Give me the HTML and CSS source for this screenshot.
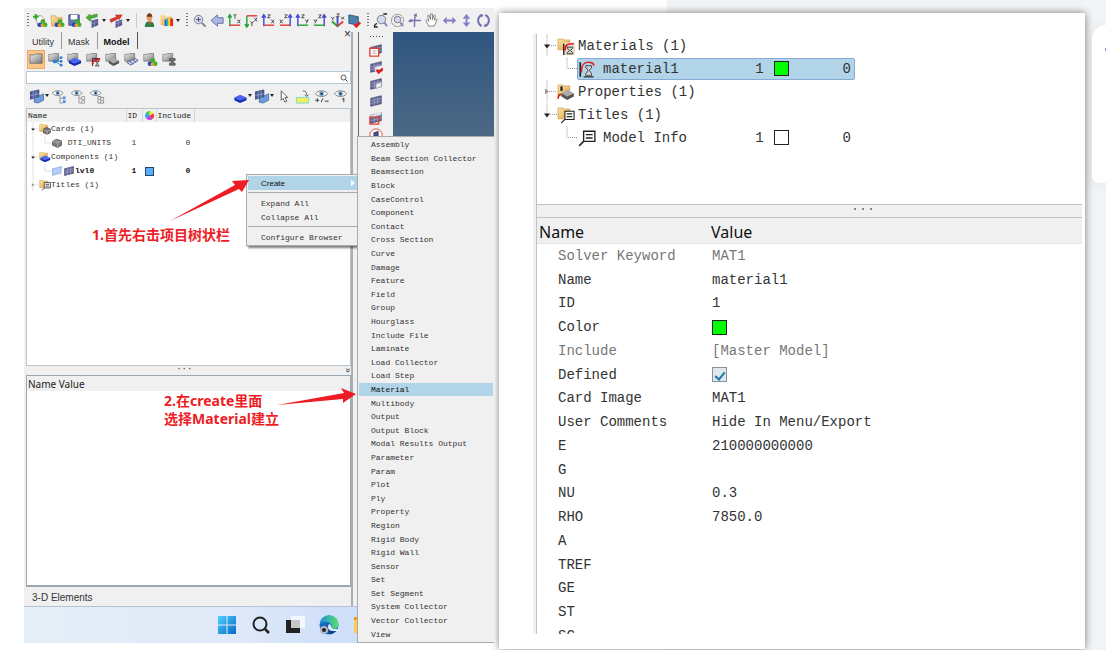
FILE: index.html
```
<!DOCTYPE html>
<html lang="zh">
<head>
    <meta charset="UTF-8">
    <meta name="viewport" content="width=device-width, initial-scale=1.0">
    <title>Material</title>
    <link rel="stylesheet" href="styles.css">
</head>
<body>

<!-- Icon sprite -->
<svg class="sprite" aria-hidden="true">
    <defs>
        <linearGradient id="gFolder" x2="1" y2="1"><stop offset="0" stop-color="#ffe6a8"/><stop offset="1" stop-color="#dda03c"/></linearGradient>
        <linearGradient id="gGray" x2="1" y2="1"><stop offset="0" stop-color="#eee"/><stop offset="1" stop-color="#777"/></linearGradient>
        <linearGradient id="gWin" x2="1" y2="1"><stop offset="0" stop-color="#4fd0fb"/><stop offset="1" stop-color="#0669c8"/></linearGradient>
        <linearGradient id="gEdge" x2="1"><stop offset="0" stop-color="#1b8fe0"/><stop offset="1" stop-color="#5be06a"/></linearGradient>
    </defs>
    <symbol id="balls" viewBox="0 0 16 16"><circle cx="10.500" cy="9" r="2.500" fill="#3fae2a"/><circle cx="7.500" cy="12.500" r="2.500" fill="#1c3fd4"/><circle cx="13" cy="12.500" r="2.500" fill="#3fae2a"/><circle cx="10" cy="13" r="2" fill="#e8a020"/></symbol>
    <symbol id="new" viewBox="0 0 16 16"><path d="M3 3h6l3 3v8H5z" fill="#fff" stroke="#999"/><path d="M3 1v6M0 4h6" stroke="#36a52c" stroke-width="2"/><use href="#balls"/></symbol>
    <symbol id="open" viewBox="0 0 16 16"><path d="M1 3h5l1 2h6v3l-2 6H2z" fill="url(#gFolder)" stroke="#c58c30" stroke-width=".6"/><use href="#balls"/></symbol>
    <symbol id="save" viewBox="0 0 16 16"><path d="M2 2h11v11H2z" fill="#6877ad" stroke="#3e4a80"/><path d="M4 2h7v5H4z" fill="#fff"/><use href="#balls"/></symbol>
    <symbol id="mesh" viewBox="0 0 16 16"><path d="M2 5l12-3v9L2 14z" fill="#626795" stroke="#333a68" stroke-width=".8"/><path d="M2 8l12-3M2 11l12-3M6 4v9M10 3v9" stroke="#a7abcc" stroke-width=".8" fill="none"/></symbol>
    <symbol id="import" viewBox="0 0 16 16"><path d="M7 8l7-2v7l-7 3z" fill="#565b91"/><path d="M10 7v8M7 12l7-3" stroke="#9da1c4" stroke-width=".7"/><path d="M1 5l4-4v2l8-2v3L6 6v3z" fill="#4caf35" stroke="#2c7b1c" stroke-width=".5"/></symbol>
    <symbol id="export" viewBox="0 0 16 16"><path d="M7 9l7-2v6l-7 3z" fill="#565b91"/><path d="M10 8v7M7 12l7-3" stroke="#9da1c4" stroke-width=".7"/><path d="M1 7l7-3-1-2 7 0-3 5-1-1-8 4z" fill="#e1382d" stroke="#9b2019" stroke-width=".5"/></symbol>
    <symbol id="user" viewBox="0 0 16 16"><path d="M3 15c0-5 2-6 5-6s5 1 5 6z" fill="#27824b"/><path d="M7 9l2 5 1-5z" fill="#e43"/><ellipse cx="8" cy="5" rx="3" ry="4" fill="#e0a066"/><path d="M5 4c0-5 6-5 6 0z" fill="#713616"/></symbol>
    <symbol id="chart" viewBox="0 0 16 16"><path d="M1 2h5l1 2h7v9H2z" fill="url(#gFolder)"/><path d="M6 14V7h2v7z" fill="#25d"/><path d="M8 14V6h2v8z" fill="#0bc"/><path d="M10 14V6h2v8z" fill="#fd0"/><path d="M12 14V6h3v8z" fill="#e22"/></symbol>
    <symbol id="zoom" viewBox="0 0 16 16"><circle cx="7" cy="7" r="4.500" fill="#d8ddf3" stroke="#777c93"/><path d="M10.500 10.500l4 4" stroke="#7c7c95" stroke-width="2"/><path d="M7 4.500v5M4.500 7h5" stroke="#446"/></symbol>
    <symbol id="back" viewBox="0 0 16 16"><path d="M1 8l7-6v3h6v6H8v3z" fill="#acb6e5" stroke="#6570a9"/></symbol>
    <symbol id="ax1" viewBox="0 0 16 16"><path d="M3 14V2M1 5l2-3 2 3" stroke="#20a52c" stroke-width="1.500" fill="none"/><path d="M3 13h11" stroke="#e53838" stroke-width="1.500"/><path d="M7 1l1.500 2L10 1M8.500 3v3M11 7l3 4M14 7l-3 4" stroke="#444" fill="none"/></symbol>
    <symbol id="ax2" viewBox="0 0 16 16"><path d="M3 3v12M1 12l2 3 2-3" stroke="#20a52c" stroke-width="1.500" fill="none"/><path d="M3 3h11" stroke="#e53838" stroke-width="1.500"/><path d="M7 9l1.500 2L10 9M8.500 11v3M11 5l3 4M14 5l-3 4" stroke="#444" fill="none"/></symbol>
    <symbol id="ax3" viewBox="0 0 16 16"><path d="M3 14V2M1 5l2-3 2 3" stroke="#4347d8" stroke-width="1.500" fill="none"/><path d="M3 13h11" stroke="#e53838" stroke-width="1.500"/><path d="M7 2h3L7 5h3M11 7l3 4M14 7l-3 4" stroke="#444" fill="none"/></symbol>
    <symbol id="ax4" viewBox="0 0 16 16"><path d="M13 14V2M11 5l2-3 2 3" stroke="#4347d8" stroke-width="1.500" fill="none"/><path d="M2 13h11" stroke="#e53838" stroke-width="1.500"/><path d="M7 2h3L7 5h3M2 7l3 4M5 7l-3 4" stroke="#444" fill="none"/></symbol>
    <symbol id="ax5" viewBox="0 0 16 16"><path d="M3 14V2M1 5l2-3 2 3" stroke="#4347d8" stroke-width="1.500" fill="none"/><path d="M3 13h11" stroke="#20a52c" stroke-width="1.500"/><path d="M7 2h3L7 5h3M11 7l1.500 2L14 7l-2 4" stroke="#444" fill="none"/></symbol>
    <symbol id="ax6" viewBox="0 0 16 16"><path d="M13 14V2M11 5l2-3 2 3" stroke="#4347d8" stroke-width="1.500" fill="none"/><path d="M2 13h11" stroke="#20a52c" stroke-width="1.500"/><path d="M7 2h3L7 5h3M2 7l1.500 2L5 7l-2 4" stroke="#444" fill="none"/></symbol>
    <symbol id="ax7" viewBox="0 0 16 16"><path d="M8 15V4" stroke="#4347d8" stroke-width="2"/><path d="M8 14L2 9" stroke="#20a52c" stroke-width="2"/><path d="M8 14l6-5" stroke="#e53838" stroke-width="2"/><path d="M1 4l2 2 2-2M3 6v2M7 1h3L7 4h3M12 4l3 3M15 4l-3 3" stroke="#444" fill="none"/></symbol>
    <symbol id="view" viewBox="0 0 16 16"><path d="M2 2l10 2v9L2 11z" fill="#4b80ab" stroke="#27577f"/><path d="M8 12l2 2 4-4" stroke="#df2020" stroke-width="3" fill="none"/></symbol>
    <symbol id="lens" viewBox="0 0 16 16"><circle cx="9" cy="7" r="4.500" fill="#d5d8f3" stroke="#777"/><path d="M12 10l3 4" stroke="#8a83b5" stroke-width="2"/><path d="M1 14l3-3M1 15h4M11 1h4" stroke="#222" stroke-width="1.500"/></symbol>
    <symbol id="lens2" viewBox="0 0 16 16"><circle cx="8" cy="8" r="6.500" fill="none" stroke="#666" stroke-dasharray="2 1"/><circle cx="8" cy="7" r="3.500" fill="#d5d8f3" stroke="#777"/><path d="M11 10l3 4" stroke="#8a83b5" stroke-width="2"/></symbol>
    <symbol id="pan" viewBox="0 0 16 16"><path d="M9 1c-1 4-1 9-1 14M2 8h13" stroke="#7774ac" stroke-width="1.500" fill="none"/><path d="M1 9l4-3v4zM7 3l3-3 1 4z" fill="#7774ac"/></symbol>
    <symbol id="hand" viewBox="0 0 16 16"><path d="M5 14L2 8l1-1 2 2-1-6 1-1 2 5V1h2v6l2-5 1 1-1 5 2-2 1 1-3 7z" fill="#fff" stroke="#666" stroke-width=".8"/></symbol>
    <symbol id="horiz" viewBox="0 0 16 16"><path d="M1 8l4-4v3h6V4l4 4-4 4V9H5v3z" fill="#8280c7"/></symbol>
    <symbol id="vert" viewBox="0 0 16 16"><path d="M8 1l4 5H9v4h3l-4 5-4-5h3V6H4z" fill="#8280c7"/></symbol>
    <symbol id="spin" viewBox="0 0 16 16"><path d="M6 2C1 5 1 11 6 14M10 2c5 3 5 9 0 12" fill="none" stroke="#726fae" stroke-width="2"/><path d="M5 1l3 1-2 3zM11 15l-3-1 2-3z" fill="#726fae"/></symbol>
    <symbol id="gfold" viewBox="0 0 16 16"><path d="M1 3h5l1-1h7v10H1z" fill="url(#gGray)" stroke="#555" stroke-width=".7"/></symbol>
    <symbol id="yfold" viewBox="0 0 16 16"><path d="M1 2h5l1 1h6v10H1z" fill="url(#gFolder)" stroke="#c79b4c" stroke-width=".7"/></symbol>
    <symbol id="blue" viewBox="0 0 16 16"><path d="M2 9l6-3 7 3-7 3z" fill="#4a66f3"/><path d="M2 9l6 3 7-3v3l-7 3-6-3z" fill="#172bb5"/></symbol>
    <symbol id="slab" viewBox="0 0 16 16"><path d="M4 9l5-3 6 3-6 3z" fill="#aaa"/><path d="M4 9l5 3 6-3v3l-6 3-5-3z" fill="#555"/></symbol>
    <symbol id="curve" viewBox="0 0 16 16"><path d="M7 15V7h8" fill="none" stroke="#222"/><path d="M7 13c0-4 2-5 8-5" fill="none" stroke="#e01c2b" stroke-width="2"/><path d="M10 10h4l-2 2 2 3h-4l2-3z" fill="#ccc" stroke="#333" stroke-width=".7"/></symbol>
    <symbol id="g2" viewBox="0 0 16 16"><use href="#gfold" width="13" height="13"/><path d="M13 6L7 10l7 4M7 10h8" stroke="#3b86ce" fill="none"/><circle cx="7" cy="10" r="2" fill="#2d7fd6"/><circle cx="14" cy="6" r="1.500" fill="#2d7fd6"/><circle cx="14" cy="10" r="1.500" fill="#2d7fd6"/><circle cx="14" cy="14" r="1.500" fill="#2d7fd6"/></symbol>
    <symbol id="g3" viewBox="0 0 16 16"><use href="#gfold" width="13" height="13"/><use href="#blue"/></symbol>
    <symbol id="g4" viewBox="0 0 16 16"><use href="#gfold" width="13" height="13"/><use href="#curve"/></symbol>
    <symbol id="g5" viewBox="0 0 16 16"><use href="#gfold" width="13" height="13"/><use href="#slab"/></symbol>
    <symbol id="g6" viewBox="0 0 16 16"><use href="#gfold" width="13" height="13"/><path d="M3 11l9-4 3 2-8 5zM6 10l4 3M9 8l4 3" fill="#cbd1ef" stroke="#555c92"/></symbol>
    <symbol id="g7" viewBox="0 0 16 16"><use href="#gfold" width="13" height="13"/><use href="#balls"/></symbol>
    <symbol id="g8" viewBox="0 0 16 16"><use href="#gfold" width="13" height="13"/><path d="M8 7h6v2h-2v3h2v2H8v-2h2V9H8z" fill="#777" stroke="#555"/></symbol>
    <symbol id="y-card" viewBox="0 0 16 16"><use href="#yfold" width="14" height="14"/><path d="M6 8l4-2 5 2v5l-4 2-5-2z" fill="#777" stroke="#444"/><path d="M6 9l5 2 4-2M11 11v4" stroke="#bbb" fill="none"/></symbol>
    <symbol id="y-blue" viewBox="0 0 16 16"><use href="#yfold" width="14" height="14"/><use href="#blue"/></symbol>
    <symbol id="y-curve" viewBox="0 0 16 16"><use href="#yfold" width="14" height="14"/><path d="M6 5h10v11H6z" fill="#e9dcc8"/><path d="M6 16V6" stroke="#222" stroke-width="1.200"/><path d="M7 12c0-5 2-6 8-6" fill="none" stroke="#e01c2b" stroke-width="1.500"/><path d="M9 9h5v1l-2 2 2 2v1H9v-1l2-2-2-2z" fill="#ccc" stroke="#333" stroke-width=".8"/></symbol>
    <symbol id="y-slab" viewBox="0 0 16 16"><use href="#yfold" width="14" height="14"/><path d="M1 14c0-3 1-4 3-4" stroke="#c22" stroke-width="1.500" fill="none"/><path d="M4 3v4" stroke="#222" stroke-width="2"/><use href="#slab"/></symbol>
    <symbol id="note" viewBox="0 0 16 16"><path d="M5 2h10v9H5z" fill="#fff" stroke="#222" stroke-width="1.200"/><path d="M7 5h6M7 8h6M5 11l-4 4" stroke="#222" stroke-width="1.300"/></symbol>
    <symbol id="y-note" viewBox="0 0 16 16"><use href="#yfold" width="14" height="14"/><use href="#note" x="3" y="3" width="13" height="13"/></symbol>
    <symbol id="card" viewBox="0 0 16 16"><path d="M2 6l5-3 7 2v6l-5 3-7-3z" fill="#777" stroke="#555"/><path d="M2 6l7 2 5-3M9 8v6M5 4l6 3" stroke="#bbb" fill="none"/></symbol>
    <symbol id="material" viewBox="0 0 16 16"><path d="M2 15V2" stroke="#222" stroke-width="1.500"/><path d="M3 11C3 4 5 2 9 2s5 1 5 3" stroke="#e01c2b" stroke-width="1.500" fill="none"/><path d="M7 5h5v2l-2 2 2 3v2H7v-2l2-3-2-2z" fill="#ccc" stroke="#444" stroke-width=".8"/><path d="M5 15h9" stroke="#222"/></symbol>
    <symbol id="sheet" viewBox="0 0 16 16"><path d="M2 5l5-1 7-2-1 9-5 1-6 2z" fill="#b5cffb" stroke="#86a5dc"/></symbol>
    <symbol id="bluemesh" viewBox="0 0 16 16"><path d="M5 7l4 1 6-3v7l-6 3-4-1z" fill="#6f9ddb" stroke="#345a96" stroke-width=".7"/><path d="M1 3l9-2v7l-9 3z" fill="#4a5a94" stroke="#28366d" stroke-width=".7"/><path d="M1 7l9-2M4 2v8M7 2v7" fill="none" stroke="#a9b5dc" stroke-width=".7"/></symbol>
    <symbol id="eye" viewBox="0 0 16 16"><path d="M1 5c3-4 10-4 13 0-3 4-10 4-13 0z" fill="#fff" stroke="#777"/><circle cx="7.500" cy="5" r="2.500" fill="#6598c8"/><circle cx="7.500" cy="5" r="1" fill="#123"/></symbol>
    <symbol id="eye1" viewBox="0 0 16 16"><use href="#eye" width="14" height="14"/><path d="M9 7v8h3M9 10h3" stroke="#999" fill="none"/><path d="M12 8h3v3h-3zM12 12h3v3h-3z" fill="#568de0"/></symbol>
    <symbol id="eye2" viewBox="0 0 16 16"><use href="#eye" width="14" height="14"/><path d="M9 7v8h3M9 10h3" stroke="#999" fill="none"/><path d="M12 8h3v3h-3zM12 12h3v3h-3z" fill="#fff" stroke="#999"/></symbol>
    <symbol id="eye3" viewBox="0 0 16 16"><use href="#eye" width="14" height="14"/><path d="M9 8h3v3H9zM12 12h3v3h-3zM12 9h3v2M9 12v3h3" fill="#fff" stroke="#888"/></symbol>
    <symbol id="eye4" viewBox="0 0 16 16"><use href="#eye"/><path d="M1 12h4M3 10v4M9 10l-2 4M11 13h4" stroke="#333"/></symbol>
    <symbol id="eye5" viewBox="0 0 16 16"><use href="#eye"/><path d="M9 11l2-1v4" stroke="#333" fill="none"/></symbol>
    <symbol id="cursor" viewBox="0 0 16 16"><path d="M5 2v10l2-2 2 4 2-1-2-4h3z" fill="#fff" stroke="#555"/></symbol>
    <symbol id="mark" viewBox="0 0 16 16"><path d="M1 9h13v6H1z" fill="#f5ee55" stroke="#6fdadd"/><path d="M8 2c3 0 4 2 4 5M10 6l2 2 2-2" stroke="#555" fill="none"/></symbol>
    <symbol id="wheel" viewBox="0 0 16 16"><path d="M8 8V1a7 7 0 016 4z" fill="#f4e53c"/><path d="M8 8l6-3a7 7 0 01-3 9z" fill="#f0394b"/><path d="M8 8l3 6a7 7 0 01-8-2z" fill="#b93cf0"/><path d="M8 8l-5 4a7 7 0 010-8z" fill="#2da6f2"/><path d="M8 8L3 4a7 7 0 015-3z" fill="#36ce46"/></symbol>
    <symbol id="mag" viewBox="0 0 16 16"><circle cx="7" cy="7" r="5" fill="none" stroke="#333" stroke-width="1.600"/><path d="M11 11l4 4" stroke="#333" stroke-width="2"/></symbol>
    <symbol id="m1" viewBox="0 0 16 16"><use href="#mesh"/><path d="M1 6h10v9H1z" fill="#fff" stroke="#e23c2c" stroke-width="1.500"/><path d="M3 9h6M3 12h6M6 8v5" stroke="#bbb"/></symbol>
    <symbol id="m2" viewBox="0 0 16 16"><use href="#mesh"/><path d="M7 8l8-2v5l-8 2z" fill="#e9e9f3"/><path d="M9 11l2 3 5-4" stroke="#e01c1c" stroke-width="3" fill="none"/></symbol>
    <symbol id="m3" viewBox="0 0 16 16"><use href="#mesh"/><path d="M8 8l6-2v5l-6 2z" fill="#f2f2f8" stroke="#aaa"/></symbol>
    <symbol id="m5" viewBox="0 0 16 16"><use href="#mesh"/><path d="M2 5l12-4v3L2 7z" fill="#eee"/><path d="M1 7h10v8H1z" fill="none" stroke="#e23c2c" stroke-width="1.500"/></symbol>
    <symbol id="m6" viewBox="0 0 16 16"><circle cx="8" cy="8" r="7" fill="#fff" stroke="#e23c2c"/><path d="M5 5l6-2v9l-6 1z" fill="#44497c"/></symbol>
    <!-- tree connectors -->
    <symbol id="t-open" viewBox="0 0 20 22"><path d="M10 0v22M10 11h10" stroke="#999" stroke-dasharray="1 1" fill="none"/><path d="M7 10h6l-3 4z" fill="#222"/></symbol>
    <symbol id="t-shut" viewBox="0 0 20 22"><path d="M10 0v22M10 11h10" stroke="#999" stroke-dasharray="1 1" fill="none"/><path d="M8 8v6l4-3z" fill="#999"/></symbol>
    <symbol id="t-last" viewBox="0 0 20 22"><path d="M10 0v11h10" stroke="#999" stroke-dasharray="1 1" fill="none"/><path d="M7 10h6l-3 4z" fill="#222"/></symbol>
    <symbol id="t-line" viewBox="0 0 20 22"><path d="M10 0v22" stroke="#999" stroke-dasharray="1 1"/></symbol>
    <symbol id="t-leaf" viewBox="0 0 20 22"><path d="M10 0v11h10" stroke="#999" stroke-dasharray="1 1" fill="none"/></symbol>
</svg>

<!-- Modelling application -->
<section class="app">
    <div class="toolbar">
        <span class="grip"></span>
        <button aria-label="New"><svg><use href="#new"/></svg></button>
        <button aria-label="Open"><svg><use href="#open"/></svg></button>
        <button aria-label="Save"><svg><use href="#save"/></svg></button>
        <button class="split" aria-label="Import"><svg><use href="#import"/></svg></button>
        <button class="split" aria-label="Export"><svg><use href="#export"/></svg></button>
        <span class="bar"></span>
        <button aria-label="User profile"><svg><use href="#user"/></svg></button>
        <button class="split" aria-label="Results"><svg><use href="#chart"/></svg></button>
        <span class="grip"></span>
        <button aria-label="Zoom"><svg><use href="#zoom"/></svg></button>
        <button aria-label="Previous view"><svg><use href="#back"/></svg></button>
        <button aria-label="XY top"><svg><use href="#ax1"/></svg></button>
        <button aria-label="XY bottom"><svg><use href="#ax2"/></svg></button>
        <button aria-label="XZ left"><svg><use href="#ax3"/></svg></button>
        <button aria-label="XZ right"><svg><use href="#ax4"/></svg></button>
        <button aria-label="YZ front"><svg><use href="#ax5"/></svg></button>
        <button aria-label="YZ rear"><svg><use href="#ax6"/></svg></button>
        <button aria-label="Isometric"><svg><use href="#ax7"/></svg></button>
        <button aria-label="Views"><svg><use href="#view"/></svg></button>
        <span class="grip"></span>
        <button aria-label="Zoom in or out"><svg><use href="#lens"/></svg></button>
        <button aria-label="Circle zoom"><svg><use href="#lens2"/></svg></button>
        <button aria-label="Pan"><svg><use href="#pan"/></svg></button>
        <button aria-label="Drag"><svg><use href="#hand"/></svg></button>
        <button aria-label="Rotate left and right"><svg><use href="#horiz"/></svg></button>
        <button aria-label="Rotate up and down"><svg><use href="#vert"/></svg></button>
        <button aria-label="Spin"><svg><use href="#spin"/></svg></button>
    </div>

    <div class="workspace">
        <div class="browser">
            <div class="tabs">
                <button>Utility</button>
                <button>Mask</button>
                <button class="active">Model</button>
                <button class="close" aria-label="Close">×</button>
            </div>
            <div class="views">
                <button class="active" aria-label="Model view"><svg><use href="#gfold"/></svg></button>
                <button aria-label="Assembly view"><svg><use href="#g2"/></svg></button>
                <button aria-label="Component view"><svg><use href="#g3"/></svg></button>
                <button aria-label="Material view"><svg><use href="#g4"/></svg></button>
                <button aria-label="Property view"><svg><use href="#g5"/></svg></button>
                <button aria-label="Include view"><svg><use href="#g6"/></svg></button>
                <button aria-label="Load view"><svg><use href="#g7"/></svg></button>
                <button aria-label="Section view"><svg><use href="#g8"/></svg></button>
            </div>
            <div class="search">
                <input type="text" aria-label="Search">
                <svg><use href="#mag"/></svg>
            </div>
            <div class="actions">
                <button class="split" aria-label="Entities"><svg><use href="#bluemesh"/></svg></button>
                <button aria-label="Show all"><svg><use href="#eye1"/></svg></button>
                <button aria-label="Hide all"><svg><use href="#eye2"/></svg></button>
                <button aria-label="Reverse all"><svg><use href="#eye3"/></svg></button>
                <span class="fill"></span>
                <button class="split" aria-label="Components"><svg><use href="#blue"/></svg></button>
                <button class="split" aria-label="Elements"><svg><use href="#bluemesh"/></svg></button>
                <button aria-label="Select"><svg><use href="#cursor"/></svg></button>
                <button aria-label="Highlight"><svg><use href="#mark"/></svg></button>
                <button aria-label="Show or hide"><svg><use href="#eye4"/></svg></button>
                <button aria-label="Isolate"><svg><use href="#eye5"/></svg></button>
            </div>
            <div class="model-tree">
                <table>
                    <colgroup><col class="c-name"><col class="c-id"><col class="c-color"><col class="c-include"><col></colgroup>
                    <thead>
                        <tr><th>Name</th><th>ID</th><th aria-label="Color"><svg><use href="#wheel"/></svg></th><th>Include</th><th></th></tr>
                    </thead>
                    <tbody>
                        <tr><td><div class="node"><svg class="link"><use href="#t-open"/></svg><svg><use href="#y-card"/></svg>Cards (1)</div></td><td></td><td></td><td></td><td></td></tr>
                        <tr><td><div class="node"><svg class="link"><use href="#t-line"/></svg><svg class="link"><use href="#t-leaf"/></svg><svg><use href="#card"/></svg>&nbsp;DTI_UNITS</div></td><td>1</td><td></td><td>0</td><td></td></tr>
                        <tr><td><div class="node"><svg class="link"><use href="#t-open"/></svg><svg><use href="#y-blue"/></svg>Components (1)</div></td><td></td><td></td><td></td><td></td></tr>
                        <tr class="bold"><td><div class="node"><svg class="link"><use href="#t-line"/></svg><svg class="link"><use href="#t-leaf"/></svg><svg><use href="#sheet"/></svg><svg><use href="#mesh"/></svg>lvl0</div></td><td>1</td><td><span class="swatch sky"></span></td><td>0</td><td></td></tr>
                        <tr><td><div class="node"><svg class="link"><use href="#t-shut"/></svg><svg><use href="#y-note"/></svg>Titles (1)</div></td><td></td><td></td><td></td><td></td></tr>
                    </tbody>
                </table>
            </div>
            <div class="splitter"><span>···</span><span class="fold">»</span></div>
            <div class="entity">
                <div class="entity-head">Name Value</div>
            </div>
            <div class="status">3-D Elements</div>
        </div>

        <div class="side-tools">
            <span class="dots"></span>
            <button aria-label="Shaded mesh"><svg><use href="#m1"/></svg></button>
            <button aria-label="Mask"><svg><use href="#m2"/></svg></button>
            <button aria-label="Reverse mask"><svg><use href="#m3"/></svg></button>
            <button aria-label="Unmask all"><svg><use href="#mesh"/></svg></button>
            <button aria-label="Unmask shown"><svg><use href="#m5"/></svg></button>
            <button aria-label="Spherical clip"><svg><use href="#m6"/></svg></button>
        </div>
        <div class="viewport"></div>
    </div>

    <div class="taskbar">
        <svg viewBox="0 0 20 20"><path d="M1 1h8.500v8.500H1zM10.500 1H19v8.500h-8.500zM1 10.500h8.500V19H1zM10.500 10.500H19V19h-8.500z" fill="url(#gWin)"/></svg>
        <svg viewBox="0 0 20 20"><circle cx="9" cy="9" r="6.500" fill="none" stroke="#222" stroke-width="2"/><path d="M14 14l4 4" stroke="#222" stroke-width="2.500"/></svg>
        <svg viewBox="0 0 20 20"><path d="M1 5h14v13H1z" fill="#222"/><path d="M6 1h14v12H6z" fill="#fff" opacity=".75"/></svg>
        <svg viewBox="0 0 20 20"><circle cx="10" cy="10" r="9.500" fill="#126ab9"/><path d="M1 9a9 9 0 0118.500 1c0 4-6 5-7 2 2-4-7-7-11.500-3z" fill="url(#gEdge)"/><path d="M8 9c-2 5 3 8 9 7-2 2-4 3-7 3z" fill="#0b3f8e"/><path d="M10 9c3 0 1 5 6 5h4v2h-6c-5 0-6-4-4-7z" fill="#dfe8f9"/><circle cx="5" cy="15" r="4" fill="#b5b5c8"/><circle cx="5" cy="15" r="2" fill="#222"/></svg>
        <svg viewBox="0 0 20 20"><path d="M1 2h8l2 3h8v13H1z" fill="#ffce45"/><path d="M1 2h8l2 3H1z" fill="#e2a010"/></svg>
    </div>

    <!-- Right-click menu -->
    <ul class="context-menu">
        <li class="active"><button>Create</button></li>
        <li class="rule"></li>
        <li><button>Expand All</button></li>
        <li><button>Collapse All</button></li>
        <li class="rule"></li>
        <li><button>Configure Browser</button></li>
    </ul>
    <ul class="submenu">
        <li><button>Assembly</button></li>
        <li><button>Beam Section Collector</button></li>
        <li><button>Beamsection</button></li>
        <li><button>Block</button></li>
        <li><button>CaseControl</button></li>
        <li><button>Component</button></li>
        <li><button>Contact</button></li>
        <li><button>Cross Section</button></li>
        <li><button>Curve</button></li>
        <li><button>Damage</button></li>
        <li><button>Feature</button></li>
        <li><button>Field</button></li>
        <li><button>Group</button></li>
        <li><button>Hourglass</button></li>
        <li><button>Include File</button></li>
        <li><button>Laminate</button></li>
        <li><button>Load Collector</button></li>
        <li><button>Load Step</button></li>
        <li class="active"><button>Material</button></li>
        <li><button>Multibody</button></li>
        <li><button>Output</button></li>
        <li><button>Output Block</button></li>
        <li><button>Modal Results Output</button></li>
        <li><button>Parameter</button></li>
        <li><button>Param</button></li>
        <li><button>Plot</button></li>
        <li><button>Ply</button></li>
        <li><button>Property</button></li>
        <li><button>Region</button></li>
        <li><button>Rigid Body</button></li>
        <li><button>Rigid Wall</button></li>
        <li><button>Sensor</button></li>
        <li><button>Set</button></li>
        <li><button>Set Segment</button></li>
        <li><button>System Collector</button></li>
        <li><button>Vector Collector</button></li>
        <li><button>View</button></li>
    </ul>

    <!-- Step notes -->
    <p class="tip tip-one">1.首先右击项目树状栏</p>
    <p class="tip tip-two">2.在create里面<br>选择Material建立</p>
    <svg class="arrow arrow-one" viewBox="0 0 80 44"><path d="M0 42L65 6l-3-4 17-1-7 12-3-3z" fill="#ee1c25"/></svg>
    <svg class="arrow arrow-two" viewBox="0 0 80 18"><path d="M0 17l67-12-3-5 15 6-13 9v-4z" fill="#ee1c25"/></svg>
</section>

<!-- Material details -->
<section class="dialog">
    <div class="panel">
        <div class="tree">
            <div class="row"><svg class="link"><use href="#t-open"/></svg><svg><use href="#y-curve"/></svg><span>Materials (1)</span></div>
            <div class="row child"><svg class="link"><use href="#t-leaf"/></svg>
                <div class="item selected"><svg><use href="#material"/></svg><span class="label">material1</span><span>1</span><span class="swatch green"></span><span class="num">0</span></div>
            </div>
            <div class="row"><svg class="link"><use href="#t-shut"/></svg><svg><use href="#y-slab"/></svg><span>Properties (1)</span></div>
            <div class="row"><svg class="link"><use href="#t-last"/></svg><svg><use href="#y-note"/></svg><span>Titles (1)</span></div>
            <div class="row child"><svg class="link"><use href="#t-leaf"/></svg>
                <div class="item"><svg><use href="#note"/></svg><span class="label">Model Info</span><span>1</span><span class="swatch"></span><span class="num">0</span></div>
            </div>
        </div>
        <div class="divider"><i></i><i></i><i></i></div>
        <div class="props-head"><span>Name</span><span>Value</span></div>
        <div class="props">
            <table>
                <tr class="dim"><th scope="row">Solver Keyword</th><td>MAT1</td></tr>
                <tr><th scope="row">Name</th><td>material1</td></tr>
                <tr><th scope="row">ID</th><td>1</td></tr>
                <tr><th scope="row">Color</th><td><span class="swatch green"></span></td></tr>
                <tr class="dim"><th scope="row">Include</th><td>[Master Model]</td></tr>
                <tr><th scope="row"><label for="defined">Defined</label></th><td><input type="checkbox" id="defined" checked></td></tr>
                <tr><th scope="row">Card Image</th><td>MAT1</td></tr>
                <tr><th scope="row">User Comments</th><td>Hide In Menu/Export</td></tr>
                <tr><th scope="row">E</th><td>210000000000</td></tr>
                <tr><th scope="row">G</th><td></td></tr>
                <tr><th scope="row">NU</th><td>0.3</td></tr>
                <tr><th scope="row">RHO</th><td>7850.0</td></tr>
                <tr><th scope="row">A</th><td></td></tr>
                <tr><th scope="row">TREF</th><td></td></tr>
                <tr><th scope="row">GE</th><td></td></tr>
                <tr><th scope="row">ST</th><td></td></tr>
                <tr><th scope="row">SC</th><td></td></tr>
            </table>
        </div>
    </div>
</section>

<aside class="side-card"></aside>

</body>
</html>
```
FILE: styles.css
```
* {
    box-sizing: border-box;
}
body {
    margin: 0;
    height: 100vh;
    overflow: hidden;
    display: grid;
    grid-template-columns: 470fr 598fr 14px;
    padding-left: 24px;
    background: linear-gradient(to right, #fff 60.3%, #f3f4f6 60.3%);
    color: #333;
    font-family: "Liberation Mono", monospace;
    font-size: 8px;
}
button {
    border: none;
    background: none;
    padding: 0;
    margin: 0;
    font: inherit;
    color: inherit;
    cursor: pointer;
}
ul {
    list-style: none;
    margin: 0;
    padding: 0;
}
table {
    border-collapse: collapse;
    table-layout: fixed;
    width: 100%;
}
th, td {
    padding: 0;
    text-align: left;
}
th {
    font-weight: normal;
}
svg {
    display: block;
    flex: none;
}
.sprite {
    position: absolute;
    width: 0;
    height: 0;
}

/* Application window */
.app {
    position: relative;
    display: flex;
    flex-direction: column;
    margin: 8px 0 7px;
    background: #f0f0f0;
    min-width: 0;
    overflow: hidden;
}
.toolbar {
    display: flex;
    align-items: center;
    justify-content: space-between;
    height: 24px;
    padding: 0 1px 0 2px;
}
.toolbar svg, .actions svg, .views svg {
    width: 15px;
    height: 15px;
}
.toolbar button {
    width: 17px;
    height: 17px;
    display: flex;
    align-items: center;
}
.toolbar .split {
    width: 24px;
}
.split::after {
    content: "";
    border: 2px solid transparent;
    border-top: 3px solid #222;
    margin: 2px 1px 0 2px;
}
.grip {
    width: 2px;
    height: 14px;
    margin: 0 4px 0 1px;
    background: repeating-linear-gradient(#777 0 1px, transparent 1px 3px);
}
.toolbar .grip:not(:first-child) {
    margin-left: 3px;
}
.bar {
    width: 1px;
    height: 15px;
    margin: 0 5px 0 3px;
    background: #ccc;
}
.workspace {
    flex: 1;
    min-height: 0;
    display: flex;
}

/* Browser panel */
.browser {
    flex: 1;
    display: flex;
    flex-direction: column;
    margin-right: 5px;
    padding-left: 2px;
    border-right: 2px solid #a5adb5;
}
.tabs {
    display: flex;
    height: 17px;
    font-family: "Liberation Sans", sans-serif;
    font-size: 9px;
}
.tabs button {
    padding: 2px 7px 0 6px;
    border-right: 1px solid #999;
}
.tabs .active {
    font-weight: bold;
    color: #111;
    border-color: #555;
}
.tabs .close {
    margin-left: auto;
    padding: 0;
    border: none;
    height: 4px;
    line-height: 0;
    font-size: 12px;
}
.views {
    display: flex;
    gap: 1px;
    height: 22px;
    padding: 1px 0 2px 1px;
}
.views button {
    width: 18px;
    display: flex;
    align-items: center;
    justify-content: center;
}
.views .active {
    background: #fcc48a;
    border: 1px solid #e7aa69;
}
.search {
    display: flex;
    align-items: center;
    height: 13px;
    padding-right: 2px;
    background: #fff;
    border: 1px solid #b9c9d4;
}
.search input {
    flex: 1;
    min-width: 0;
    height: 9px;
    border: none;
    padding: 0 2px;
    outline: none;
    font-size: 8px;
}
.search svg {
    width: 8px;
    height: 8px;
}
.actions {
    display: flex;
    align-items: center;
    gap: 3px;
    height: 24px;
    padding: 0 2px 0 3px;
}
.actions button {
    display: flex;
    align-items: center;
}
.actions .split {
    width: 19px;
}
.actions .split::after {
    margin: 0;
}
.actions svg {
    width: 16px;
}
.fill {
    flex: 1;
}
.model-tree {
    flex: 259 1 0;
    min-height: 0;
    background: #fff;
    border: 1px solid #b9c4cc;
    overflow: hidden;
}
.model-tree th {
    height: 13px;
    padding-left: 1px;
    background: #f0f0f0;
    border-right: 1px solid #d2d6da;
    color: #222;
    line-height: 12px;
}
.model-tree th:last-child {
    border: none;
}
.model-tree td {
    height: 14px;
    line-height: 14px;
    text-align: center;
    white-space: nowrap;
}
.model-tree svg {
    width: 12px;
    height: 12px;
}
.model-tree th svg {
    width: 11px;
    height: 11px;
}
.model-tree td:nth-child(4) {
    padding-left: 26px;
}
.c-name {
    width: 99px;
}
.c-id {
    width: 16px;
}
.c-color {
    width: 14px;
}
.c-include {
    width: 38px;
}
.node {
    display: flex;
    align-items: center;
    height: 14px;
}
.model-tree .link {
    width: 12px;
    height: 14px;
}
.bold {
    font-weight: bold;
    color: #111;
}
.swatch {
    display: block;
    width: 15px;
    height: 15px;
    background: #fff;
    border: 1px solid #222;
}
.green {
    background: #00ff00;
}
.sky {
    width: 9px;
    height: 9px;
    margin: 0 auto;
    background: #5badf7;
    border-color: #246;
}
.splitter {
    display: flex;
    justify-content: flex-end;
    height: 9px;
    line-height: 6px;
    font-size: 9px;
}
.splitter span:first-child {
    margin: 0 auto;
}
.fold {
    margin-right: 3px;
    transform: rotate(90deg);
}
.entity {
    flex: 211 1 0;
    min-height: 0;
    background: #fff;
    border: 1px solid #9ba8b2;
    border-bottom-width: 2px;
}
.entity-head {
    height: 15px;
    padding-left: 1px;
    background: #f0f0f0;
    color: #222;
    font-family: "Noto Sans", sans-serif;
    font-size: 10px;
    line-height: 16px;
}
.status {
    height: 19px;
    padding-left: 6px;
    font-family: "Liberation Sans", sans-serif;
    font-size: 10px;
    line-height: 21px;
}
.side-tools {
    width: 35px;
    display: flex;
    flex-direction: column;
    align-items: center;
    padding-top: 4px;
    border-left: 1px solid #666;
}
.side-tools button {
    height: 17px;
}
.side-tools svg {
    width: 14px;
    height: 14px;
}
.dots {
    width: 13px;
    height: 1px;
    margin-bottom: 4px;
    background: repeating-linear-gradient(to right, #555 0 1px, transparent 1px 3px);
}
.viewport {
    width: 101px;
    background: linear-gradient(#30557f, #4c6985 104px);
}
.taskbar {
    display: flex;
    align-items: center;
    gap: 14px;
    height: 37px;
    padding-left: 193px;
    border-top: 1px solid #b5c3d4;
    background: linear-gradient(to right, #e4eff8, #dfe9f8 45%, #d0dff9 65%);
}
.taskbar svg {
    width: 20px;
    height: 20px;
}

/* Menus */
.context-menu {
    position: absolute;
    top: 166px;
    right: 137px;
    width: 111px;
    padding: 1px 0 1px 1px;
    background: #f0f0f0;
    border: 1px solid #aaa;
    border-right: none;
    box-shadow: 2px 2px 2px rgba(0, 0, 0, 0.5);
}
.context-menu li {
    height: 14px;
}
.context-menu button {
    width: 100%;
    height: 100%;
    padding-left: 13px;
    text-align: left;
}
.context-menu .active {
    background: #b1d4e8;
    font-family: "Liberation Sans", sans-serif;
    color: #111;
}
.context-menu .active button {
    display: flex;
    align-items: center;
    justify-content: space-between;
}
.context-menu .active button::after {
    content: "";
    border: 3px solid transparent;
    border-left: 4px solid #fff;
    border-right: none;
    margin-right: 2px;
}
.context-menu .rule {
    height: 1px;
    margin: 2px 0 3px;
    background: #aaa;
}
.submenu {
    position: absolute;
    top: 128px;
    right: 0;
    bottom: 0;
    width: 137px;
    display: flex;
    flex-direction: column;
    padding: 1px;
    background: #f0f0f0;
    border: 1px solid #aaa;
    border-right: none;
}
.submenu li {
    flex: 1;
    display: flex;
}
.submenu button {
    width: 100%;
    padding-left: 12px;
    text-align: left;
}
.submenu .active {
    background: #b1d4e8;
    color: #111;
}

/* Step notes */
.tip {
    position: absolute;
    margin: 0;
    color: #ee1c25;
    font-family: "Noto Sans", "Noto Sans CJK SC", sans-serif;
    font-size: 14px;
    font-weight: bold;
    line-height: 18px;
    white-space: nowrap;
}
.tip-one {
    left: 68px;
    top: 218px;
}
.tip-two {
    left: 140px;
    top: 384px;
}
.arrow {
    position: absolute;
    width: 80px;
}
.arrow-one {
    left: 146px;
    top: 171px;
    height: 44px;
}
.arrow-two {
    left: 253px;
    top: 380px;
    height: 18px;
}

/* Material dialog */
.dialog {
    display: flex;
    margin: 13px 7px 1px 5px;
    padding: 21px 3px 15px 37px;
    background: #fff;
    box-shadow: 0 0 8px rgba(0, 0, 0, 0.5);
    font-size: 14px;
    min-width: 0;
    min-height: 0;
}
.panel {
    flex: 1;
    min-width: 0;
    display: flex;
    flex-direction: column;
    border-left: 1px solid #b9c4cc;
    box-shadow: -3px 0 0 #f0f0f0;
}
.tree {
    height: 170px;
}
.row {
    display: flex;
    align-items: center;
    height: 23px;
}
.row svg {
    width: 18px;
    height: 18px;
    margin-right: 3px;
}
.row .link {
    width: 20px;
    height: 23px;
    margin: 0;
}
.child {
    padding-left: 20px;
}
.item {
    display: flex;
    align-items: center;
    width: 278px;
    height: 22px;
    padding-right: 3px;
    border: 1px solid transparent;
    border-radius: 2px;
}
.item .label {
    flex: 1;
    margin-left: 4px;
}
.item .swatch {
    margin: 0 54px 0 10px;
}
.selected {
    background: #b1d4e8;
    border-color: #86a9d6;
}
.divider {
    display: flex;
    justify-content: center;
    gap: 6px;
    height: 14px;
    padding: 3px 0 0 106px;
    background: #f0f0f0;
    border-top: 1px solid #b9c4cc;
    border-bottom: 1px solid #b9c4cc;
}
.divider i {
    width: 2px;
    height: 2px;
    background: #888;
}
.props-head {
    display: flex;
    height: 26px;
    padding-left: 2px;
    background: #f0f0f0;
    border-bottom: 1px solid #dfe3e6;
    color: #111;
    font-family: "Noto Sans", sans-serif;
    font-size: 16px;
    line-height: 29px;
}
.props-head span:first-child {
    width: 172px;
}
.props {
    flex: 1 1 0;
    min-height: 0;
    overflow: hidden;
}
.props table {
    height: 404px;
}
.props th {
    width: 175px;
    padding-left: 21px;
}
.dim {
    color: #777;
}
.props input {
    appearance: none;
    display: grid;
    place-items: center;
    width: 15px;
    height: 15px;
    margin: 0;
    background: #dfe7ec;
    border: 1px solid #8a9399;
}
.props input:checked::after {
    content: "";
    width: 4px;
    height: 8px;
    border: solid #1c78ad;
    border-width: 0 2px 2px 0;
    transform: rotate(40deg);
}

/* Card at the page edge */
.side-card {
    height: 158px;
    margin-top: 25px;
    background: #fff;
    border-radius: 16px 0 0 8px;
    box-shadow: 0 2px 16px rgba(0, 0, 0, 0.08);
}
.side-card::after {
    content: "";
    display: block;
    width: 1px;
    height: 3px;
    margin: 23px 0 0 auto;
    background: #b27be0;
}
```
